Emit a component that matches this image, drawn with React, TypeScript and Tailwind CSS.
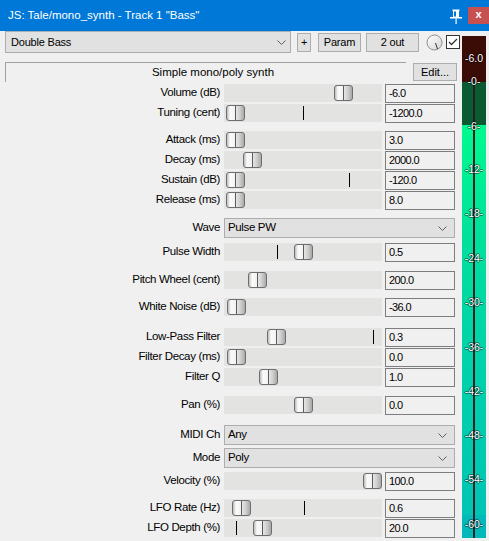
import React from 'react'

type Row =
  | { kind: 'slider'; label: string; value: string; handle: number; mark?: number; mt: string }
  | { kind: 'select'; label: string; value: string; mt: string }

const rows: Row[] = [
  { kind: 'slider', label: 'Volume (dB)', value: '-6.0', handle: 110, mt: 'mt-[2px]' },
  { kind: 'slider', label: 'Tuning (cent)', value: '-1200.0', handle: 2, mark: 79, mt: 'mt-[2px]' },
  { kind: 'slider', label: 'Attack (ms)', value: '3.0', handle: 2, mt: 'mt-[9px]' },
  { kind: 'slider', label: 'Decay (ms)', value: '2000.0', handle: 19, mt: 'mt-[2px]' },
  { kind: 'slider', label: 'Sustain (dB)', value: '-120.0', handle: 2, mark: 125, mt: 'mt-[2px]' },
  { kind: 'slider', label: 'Release (ms)', value: '8.0', handle: 2, mt: 'mt-[2px]' },
  { kind: 'select', label: 'Wave', value: 'Pulse PW', mt: 'mt-[9px]' },
  { kind: 'slider', label: 'Pulse Width', value: '0.5', handle: 70, mark: 53, mt: 'mt-[5px]' },
  { kind: 'slider', label: 'Pitch Wheel (cent)', value: '200.0', handle: 24, mt: 'mt-[10px]' },
  { kind: 'slider', label: 'White Noise (dB)', value: '-36.0', handle: 3, mt: 'mt-[9px]' },
  { kind: 'slider', label: 'Low-Pass Filter', value: '0.3', handle: 43, mark: 149, mt: 'mt-[12px]' },
  { kind: 'slider', label: 'Filter Decay (ms)', value: '0.0', handle: 3, mt: 'mt-[2px]' },
  { kind: 'slider', label: 'Filter Q', value: '1.0', handle: 35, mt: 'mt-[2px]' },
  { kind: 'slider', label: 'Pan (%)', value: '0.0', handle: 70, mt: 'mt-[10px]' },
  { kind: 'select', label: 'MIDI Ch', value: 'Any', mt: 'mt-[11px]' },
  { kind: 'select', label: 'Mode', value: 'Poly', mt: 'mt-[3px]' },
  { kind: 'slider', label: 'Velocity (%)', value: '100.0', handle: 139, mt: 'mt-[4px]' },
  { kind: 'slider', label: 'LFO Rate (Hz)', value: '0.6', handle: 8, mark: 80, mt: 'mt-[9px]' },
  { kind: 'slider', label: 'LFO Depth (%)', value: '20.0', handle: 29, mark: 12, mt: 'mt-[2px]' },
]

// meter scale labels, y relative to meter top
const scale = [
  { t: '-6.0', y: 22 },
  { t: '-0-', y: 45 },
  { t: '-6-', y: 90 },
  { t: '-12-', y: 133 },
  { t: '-18-', y: 177 },
  { t: '-24-', y: 222 },
  { t: '-30-', y: 266 },
  { t: '-36-', y: 311 },
  { t: '-42-', y: 355 },
  { t: '-48-', y: 399 },
  { t: '-54-', y: 443 },
  { t: '-60-', y: 488 },
]

const ui = "font-['Liberation_Sans',Arial,sans-serif]"
const lbl = `text-[11.5px] tracking-[-0.35px] leading-none text-black ${ui}`
const val = `text-[11px] tracking-[-0.6px] leading-none text-black ${ui}`

function Chevron() {
  return (
    <svg width="9" height="5" viewBox="0 0 9 5" className="shrink-0">
      <polyline points="0.5,0.5 4.5,4.5 8.5,0.5" fill="none" stroke="#606060" strokeWidth="1" />
    </svg>
  )
}

function Handle({ left }: { left: number }) {
  return (
    <div
      className="absolute top-[1px] w-[19px] h-[16px] rounded-[3px] border border-[#6e6e6e] bg-[linear-gradient(to_right,#bdbdbd_0%,#fbfbfb_18%,#f2f2f2_46%,#5a5a5a_46%,#5a5a5a_54%,#e4e4e4_54%,#cfcfcf_75%,#a9a9a9_100%)]"
      style={{ left }}
    />
  )
}

function SliderRow({ row }: { row: Extract<Row, { kind: 'slider' }> }) {
  return (
    <div className={`flex items-center h-[18px] ${row.mt}`}>
      <div className={`w-[219px] pr-[4px] text-right ${lbl}`}>{row.label}</div>
      <div className="relative w-[158px] h-[18px] bg-[#e3e3e1]">
        {row.mark !== undefined && (
          <div className="absolute top-[2px] w-px h-[14px] bg-black" style={{ left: row.mark }} />
        )}
        <Handle left={row.handle} />
      </div>
      <div className={`ml-[3px] w-[70px] h-[19px] border border-[#7d7d7d] bg-[#f0f0f0] pl-[3px] flex items-center ${val}`}>
        {row.value}
      </div>
    </div>
  )
}

function SelectRow({ row }: { row: Extract<Row, { kind: 'select' }> }) {
  return (
    <div className={`flex items-center h-[20px] ${row.mt}`}>
      <div className={`w-[219px] pr-[4px] text-right ${lbl}`}>{row.label}</div>
      <div className={`w-[231px] h-[20px] border border-[#adadad] bg-[#e1e1e1] pl-[3px] pr-[7px] flex items-center justify-between ${lbl}`}>
        <span>{row.value}</span>
        <Chevron />
      </div>
    </div>
  )
}

function Meter() {
  return (
    <div className="relative w-[24px] h-[502px] mt-[5px] flex flex-col">
      <div className="h-[46px] bg-[#3b0b06]" />
      <div className="h-[43px] bg-[#0b5a31]" />
      <div className="flex-1 bg-[linear-gradient(to_bottom,#00fa8e,#00e09c_30%,#00d2aa_60%,#00c4b4)]" />
      <div className="h-[23px] bg-[#00b9b8]" />
      <div className="absolute left-[11px] top-[44px] bottom-0 w-[2px] bg-[#222]" />
      {scale.map(s => (
        <div
          key={s.t}
          className={`absolute left-0 w-[24px] h-[12px] text-center text-[10.5px] leading-[12px] text-white [text-shadow:1px_0_0_rgba(0,0,0,0.5),-1px_0_0_rgba(0,0,0,0.5),0_1px_0_rgba(0,0,0,0.5),0_-1px_0_rgba(0,0,0,0.5)] ${ui}`}
          style={{ top: s.y - 6 }}
        >
          {s.t}
        </div>
      ))}
    </div>
  )
}

export default function App() {
  return (
    <div className="w-[489px] h-[541px] bg-[#f0f0f0] overflow-hidden flex flex-col">
      {/* Title bar */}
      <div className="h-[31px] bg-[#0078d7] flex items-center shrink-0">
        <div className={`pl-[8px] flex-1 text-[11.5px] text-white ${ui}`}>JS: Tale/mono_synth - Track 1 "Bass"</div>
        <svg width="14" height="15" viewBox="0 0 14 15" className="mr-[5px] mt-[1px]">
          <rect x="3.5" y="0.5" width="7" height="1.5" fill="#fff" />
          <rect x="4.5" y="2" width="5" height="6" fill="none" stroke="#fff" strokeWidth="1" />
          <rect x="7" y="2" width="2" height="6" fill="#fff" />
          <rect x="1" y="8" width="12" height="1.5" fill="#fff" />
          <rect x="6.5" y="9.5" width="1.2" height="5.5" fill="#fff" />
        </svg>
        <div className={`w-[21px] h-[17px] bg-[#c75050] flex items-center justify-center text-white text-[11px] font-bold leading-none pb-[2px] ${ui}`}>
          x
        </div>
      </div>

      <div className="flex flex-1">
        {/* Controls */}
        <div className="w-[462px] pl-[5px] flex flex-col">
          <div className={`flex items-center h-[22px] text-[11px] tracking-[-0.2px] text-black ${ui}`}>
            <div className="w-[286px] h-[22px] border border-[#adadad] bg-[#e1e1e1] pl-[5px] pr-[4px] flex items-center justify-between">
              <span>Double Bass</span>
              <Chevron />
            </div>
            <div className="ml-[6px] w-[14px] h-[19px] border border-[#adadad] bg-[#e1e1e1] flex items-center justify-center">+</div>
            <div className="ml-[7px] w-[43px] h-[19px] border border-[#adadad] bg-[#e1e1e1] flex items-center justify-center">Param</div>
            <div className="ml-[5px] w-[53px] h-[19px] border border-[#adadad] bg-[#e1e1e1] flex items-center justify-center">2 out</div>
            <svg width="17" height="17" viewBox="0 0 17 17" className="ml-[7px]">
              <defs>
                <linearGradient id="knob" x1="0" y1="0" x2="1" y2="1">
                  <stop offset="0" stopColor="#ffffff" />
                  <stop offset="1" stopColor="#d6d6d6" />
                </linearGradient>
              </defs>
              <circle cx="8.5" cy="8.5" r="7.5" fill="url(#knob)" stroke="#8c8c8c" strokeWidth="1" />
              <line x1="9.5" y1="9" x2="11.5" y2="15" stroke="#333" strokeWidth="1" />
            </svg>
            <svg width="14" height="14" viewBox="0 0 14 14" className="ml-[3px]">
              <rect x="0.5" y="0.5" width="13" height="13" fill="#fff" stroke="#333" strokeWidth="1" />
              <polyline points="3,7 5.5,9.5 11,4" fill="none" stroke="#333" strokeWidth="1.3" />
            </svg>
          </div>

          {/* Description */}
          <div className="flex items-center mt-[9px] h-[20px]">
            <div className={`w-[401px] h-[20px] border-t border-l border-[#a0a0a0] pl-[14px] flex items-center justify-center text-[11.5px] text-black ${ui}`}>
              Simple mono/poly synth
            </div>
            <div className={`ml-[7px] w-[44px] h-[18px] border border-[#adadad] bg-[#e1e1e1] flex items-center justify-center text-[11px] text-black ${ui}`}>
              Edit...
            </div>
          </div>

          {rows.map(r =>
            r.kind === 'slider' ? <SliderRow key={r.label} row={r} /> : <SelectRow key={r.label} row={r} />
          )}
        </div>

        <Meter />
      </div>
    </div>
  )
}
